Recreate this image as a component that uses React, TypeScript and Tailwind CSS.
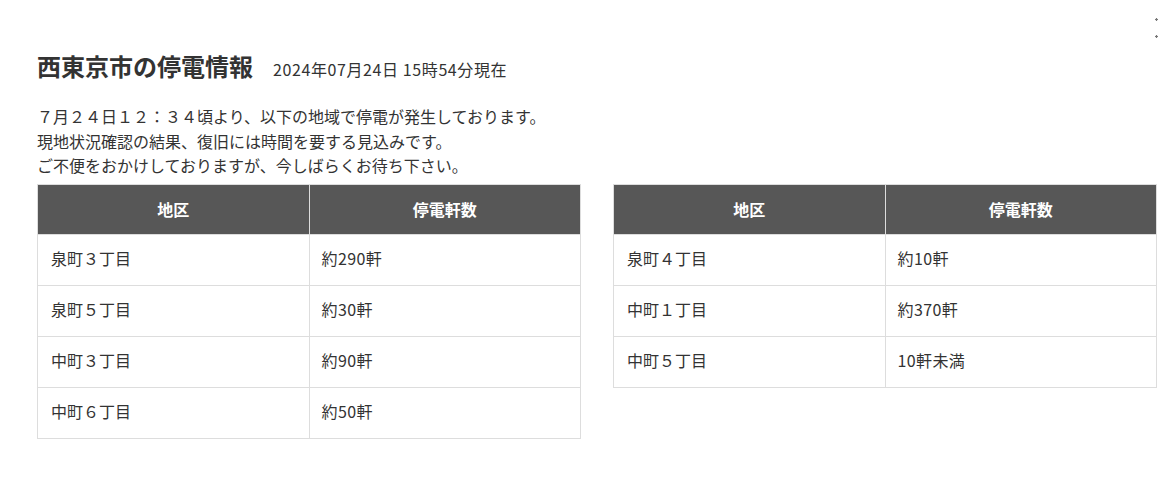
const LEFT_ROWS = [
  { area: '泉町３丁目', count: '約290軒' },
  { area: '泉町５丁目', count: '約30軒' },
  { area: '中町３丁目', count: '約90軒' },
  { area: '中町６丁目', count: '約50軒' },
];

const RIGHT_ROWS = [
  { area: '泉町４丁目', count: '約10軒' },
  { area: '中町１丁目', count: '約370軒' },
  { area: '中町５丁目', count: '10軒未満' },
];

function OutageTable({ rows }: { rows: { area: string; count: string }[] }) {
  return (
    <table className="w-full table-fixed border-collapse border border-[#dddddd] self-start">
      <thead>
        <tr>
          <th className="h-[50px] border border-[#dddddd] bg-[#575757] text-center text-[16px] font-bold text-white">
            地区
          </th>
          <th className="h-[50px] border border-[#dddddd] bg-[#575757] text-center text-[16px] font-bold text-white">
            停電軒数
          </th>
        </tr>
      </thead>
      <tbody>
        {rows.map((row) => (
          <tr key={row.area}>
            <td className="h-[51px] border border-[#dddddd] px-[13px] pb-[3px] text-[16px] text-[#333333]">
              {row.area}
            </td>
            <td className="h-[51px] border border-[#dddddd] px-[12px] pb-[3px] text-[16px] tracking-[0.4px] text-[#333333]">
              {row.count}
            </td>
          </tr>
        ))}
      </tbody>
    </table>
  );
}

export default function App() {
  return (
    <div
      className="relative min-h-[502px] w-[1158px] bg-white pl-[37px] pr-[1px] pt-[48px] text-[#333333]"
      style={{ fontFamily: '"Noto Sans CJK JP", "Noto Sans", sans-serif' }}
    >
      {/* close button peeking in at the edge */}
      <div className="absolute right-0 top-[17px] flex flex-col gap-[12px]">
        <svg width="3" height="5" viewBox="0 0 3 5">
          <path d="M0 2.5h3M1.5 1v3" stroke="#777" strokeWidth="1.2" />
        </svg>
        <svg width="3" height="5" viewBox="0 0 3 5">
          <path d="M0 2.5h3M1.5 1v3" stroke="#777" strokeWidth="1.2" />
        </svg>
      </div>

      <div className="flex items-baseline gap-[20px]">
        <h1 className="text-[24px] font-bold leading-[36px] text-[#333333]">西東京市の停電情報</h1>
        <span className="text-[16px] tracking-[0.6px] text-[#333333]">2024年07月24日 15時54分現在</span>
      </div>

      <div className="mt-[20px] text-[16px] leading-[24.5px]">
        <p>７月２４日１２：３４頃より、以下の地域で停電が発生しております。</p>
        <p>現地状況確認の結果、復旧には時間を要する見込みです。</p>
        <p>ご不便をおかけしておりますが、今しばらくお待ち下さい。</p>
      </div>

      <div className="mt-[6px] grid grid-cols-2 items-start gap-8">
        <OutageTable rows={LEFT_ROWS} />
        <OutageTable rows={RIGHT_ROWS} />
      </div>
    </div>
  );
}
